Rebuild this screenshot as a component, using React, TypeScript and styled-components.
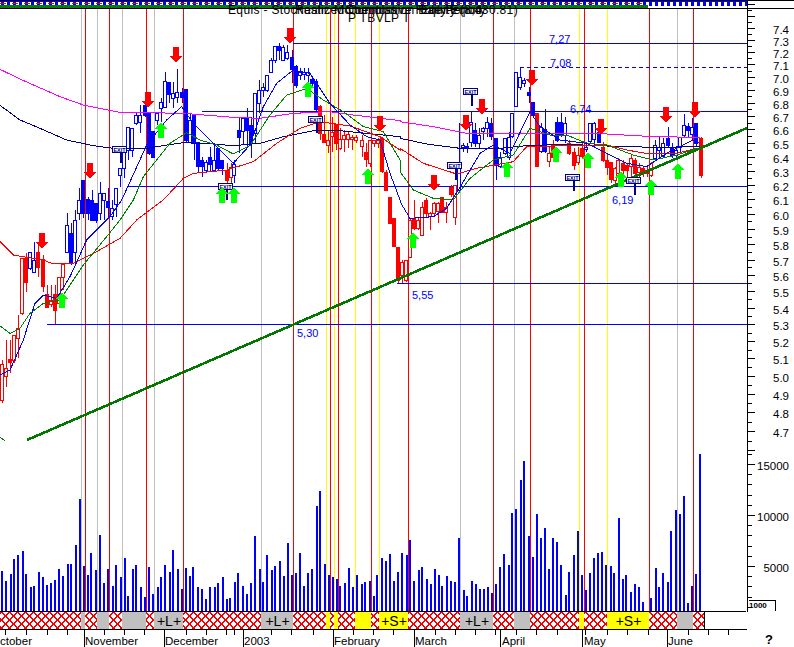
import React from 'react';
import styled, { createGlobalStyle } from 'styled-components';

const GlobalStyle = createGlobalStyle`
  html, body { margin: 0; padding: 0; background: #fff; }
`;

const ChartFrame = styled.div`
  width: 794px;
  height: 647px;
  background: #fff;
  overflow: hidden;
`;
const ChartSvg = styled.svg`
  display: block;
  width: 794px;
  height: 647px;
  shape-rendering: crispEdges;
`;
const AxisLabel = styled.text`
  font-family: "Liberation Sans", Arial, sans-serif;
  font-size: 11.5px;
  fill: #000;
  text-anchor: end;
`;
const MonthLabel = styled.text`
  font-family: "Liberation Sans", Arial, sans-serif;
  font-size: 11.5px;
  fill: #000;
`;
const LevelLabel = styled.text`
  font-family: "Liberation Sans", Arial, sans-serif;
  font-size: 11px;
  fill: #0000ff;
`;
const TitleText = styled.text`
  font-family: "Liberation Sans", Arial, sans-serif;
  font-size: 12px;
  letter-spacing: 0.35px;
  fill: #000;
`;
const BandLabel = styled.text`
  font-family: "Liberation Sans", Arial, sans-serif;
  font-size: 14px;
  fill: #000;
  text-anchor: middle;
`;
const ExitText = styled.text`
  font-family: "Liberation Sans", Arial, sans-serif;
  font-size: 5.5px;
  font-weight: 700;
  fill: #000080;
  text-anchor: middle;
`;
const HelpMark = styled.text`
  font-family: "Liberation Sans", Arial, sans-serif;
  font-size: 13px;
  font-weight: 700;
  fill: #000;
`;
const TinyValue = styled.text`
  font-family: "Liberation Sans", Arial, sans-serif;
  font-size: 8px;
  font-weight: 700;
  fill: #000;
`;

type P = [number, number];
const pts = (ox: number, oy: number, a: P[]) => a.map(([x, y]) => `${ox + x / 3},${oy + y / 3}`).join(' ');

const MAGENTA = [
  pts(0, 0, [[0,208],[60,237],[180,290],[250,315],[365,338],[440,338],[550,340],[700,352],[780,355],[880,340],[990,335],[1060,345],[1200,362]]),
  pts(400, 0, [[0,365],[100,380],[200,400],[340,400],[560,400],[620,402],[760,410],[900,412]]),
].join(' ');
const NAVY = [
  pts(0, 0, [[0,316],[60,360],[120,385],[200,420],[280,437],[340,445],[440,445],[500,435],[550,428],[640,432],[700,437],[780,430],[850,410],[940,392],[1020,392],[1100,400],[1200,410]]),
  pts(400, 0, [[0,415],[80,432],[180,445],[280,447],[380,437],[500,433],[620,438],[760,442],[900,440]]),
].join(' ');
const REDMA = [
  pts(0, 200, [[0,125],[40,165],[80,172],[130,180],[160,192],[220,190],[290,155],[360,115],[410,60],[490,0]]),
  pts(0, 0, [[550,535],[580,520],[680,510],[760,485],[830,430],[900,385],[960,365],[1050,378],[1140,410],[1200,450]]),
  pts(400, 0, [[0,445],[70,490],[170,522],[230,505],[340,485],[380,440],[500,437],[620,435],[680,450],[750,462],[830,460],[890,445]]),
].join(' ');
const GREENMA = [
  pts(0, 200, [[0,378],[30,400],[60,385],[90,340],[130,310],[180,300],[250,195],[320,110],[360,60],[400,0]]),
  pts(0, 0, [[430,530],[510,430],[560,398],[600,420],[650,435],[700,462],[750,437],[810,345],[860,285],[920,265],[970,300],[1030,335],[1090,380],[1150,395],[1200,480]]),
  pts(400, 0, [[0,515],[40,570],[100,595],[160,600],[210,535],[280,480],[340,465],[390,385],[450,405],[500,405],[560,430],[620,435],[700,465],[760,480],[830,465],[890,445]]),
].join(' ');
const BLUEMA = [
  pts(0, 200, [[0,525],[30,510],[70,420],[105,310],[130,285],[170,295],[210,230],[260,120],[330,50],[365,0]]),
  pts(0, 0, [[440,435],[500,360],[545,320],[580,370],[640,430],[700,490],[750,435],[790,320],[830,250],[880,210],[930,220],[990,310],[1050,375],[1100,410],[1140,420],[1170,520],[1200,600]]),
  pts(400, 0, [[0,605],[30,655],[100,650],[140,625],[175,570],[240,460],[280,435],[330,460],[390,335],[420,380],[480,420],[560,430],[620,460],[680,490],[740,500],[800,460],[880,420],[900,430]]),
].join(' ');

type C = [number, number, number, number, number, string];
const Z3: C[] = [[6,480,492,600,608,'r'],[18,420,505,530,560,'r'],[30,420,478,488,520,'R'],[42,405,405,480,490,'r'],[54,345,385,415,475,'r'],[66,175,175,340,345,'r'],[78,158,175,248,275,'R'],[90,155,157,205,210,'b'],[102,125,180,215,215,'b'],[114,125,155,200,230,'R'],[129,165,178,260,275,'R'],[141,255,282,322,322,'R'],[153,255,300,312,320,'r'],[165,255,282,330,372,'R'],[177,232,232,310,312,'r'],[189,193,193,232,270,'r'],[201,40,75,155,160,'b'],[213,70,100,190,195,'B'],[225,30,60,157,190,'b'],[1182,55,55,140,140,'R'],[1194,140,140,240,248,'R']];
const Z1: C[] = [[237,565,600,640,660,'b'],[250,540,540,640,655,'B'],[264,590,598,640,660,'B'],[276,570,600,660,660,'B'],[288,610,610,660,670,'B'],[300,545,580,640,660,'b'],[312,580,580,600,660,'b'],[324,565,603,620,650,'B'],[336,600,625,650,660,'b'],[348,565,565,612,650,'b'],[360,505,505,525,560,'b'],[372,445,445,505,535,'b'],[384,380,380,450,480,'b'],[396,385,385,450,470,'b'],[408,340,345,370,375,'b'],[420,315,345,365,400,'b'],[435,315,315,345,350,'B'],[447,340,340,460,465,'B'],[459,393,393,470,475,'B'],[471,340,340,362,375,'b'],[483,295,305,322,365,'b'],[495,215,243,320,325,'b'],[507,245,247,283,310,'B'],[519,245,280,296,325,'b'],[531,208,275,290,310,'b'],[546,265,275,290,310,'B'],[558,268,268,420,425,'B'],[570,340,360,425,430,'b'],[582,342,342,425,480,'B'],[594,425,425,497,515,'B'],[606,470,480,497,530,'B'],[618,480,485,510,520,'b'],[630,440,470,490,515,'B'],[642,430,480,510,510,'b'],[654,445,445,505,510,'B'],[666,480,480,505,525,'B'],[681,490,510,540,550,'R'],[693,490,500,530,550,'r'],[702,480,493,525,550,'b'],[717,350,390,410,460,'B'],[729,355,355,395,435,'b'],[741,325,355,390,440,'B'],[753,350,375,430,475,'B'],[765,280,280,400,430,'b'],[777,240,270,310,340,'b'],[789,250,260,270,290,'b'],[801,225,225,270,275,'b'],[813,175,180,215,220,'b'],[825,137,137,180,190,'b'],[837,130,137,150,180,'B'],[849,135,140,180,182,'b'],[861,135,155,172,180,'b'],[876,150,170,205,250,'B'],[888,195,197,255,265,'B'],[900,205,215,225,240,'b'],[912,205,215,222,240,'b'],[924,205,215,225,245,'b'],[936,230,238,250,260,'B'],[948,238,243,328,335,'B'],[960,315,318,400,420,'R'],[972,345,402,425,430,'R'],[984,390,420,435,460,'r'],[996,350,395,408,455,'r'],[1008,372,372,430,450,'R'],[1020,385,418,445,450,'r'],[1032,390,405,418,455,'r'],[1044,395,403,417,445,'r'],[1056,405,410,415,450,'r'],[1068,405,410,420,430,'r'],[1086,405,420,438,470,'r'],[1098,430,456,478,500,'R'],[1110,420,420,490,500,'r'],[1122,420,420,428,440,'r'],[1134,415,420,430,445,'r'],[1146,410,415,515,520,'R'],[1158,510,515,568,570,'R'],[1170,590,590,668,670,'R']];
const Z4: C[] = [[6,330,335,375,400,'r'],[18,330,330,390,395,'r'],[30,205,210,320,325,'r'],[42,150,205,235,240,'R'],[54,205,210,235,240,'r'],[66,155,170,255,258,'r'],[78,145,150,190,205,'R'],[90,185,190,200,240,'r'],[102,155,160,190,200,'r'],[114,155,160,185,220,'r'],[126,140,140,185,190,'R'],[138,155,170,185,218,'r'],[153,105,110,130,140,'R'],[165,105,105,200,225,'r']];
const Z2: C[] = [[177,370,488,570,575,'b'],[189,430,435,440,455,'b'],[201,430,437,440,460,'b'],[213,335,365,425,440,'b'],[225,370,390,430,440,'B'],[237,385,405,430,445,'b'],[249,380,385,395,420,'b'],[261,350,365,382,410,'b'],[273,355,370,410,420,'B'],[288,415,415,495,540,'B'],[300,455,470,497,505,'b'],[315,415,415,460,465,'b'],[327,395,410,470,480,'b'],[336,340,340,410,415,'b'],[348,217,217,320,322,'b'],[360,203,232,262,270,'b'],[372,235,240,248,262,'b'],[387,260,275,285,310,'B'],[399,305,305,345,348,'B'],[411,340,340,498,500,'R'],[423,370,382,455,458,'b'],[435,328,388,455,460,'B'],[447,440,460,485,500,'r'],[459,420,435,472,480,'R'],[471,350,365,420,425,'B'],[483,340,365,405,410,'B'],[495,350,368,405,430,'b'],[507,420,430,460,465,'R'],[522,445,455,495,510,'R'],[534,440,465,485,495,'r'],[546,430,445,470,475,'R'],[558,425,440,445,455,'b'],[570,370,370,425,430,'b'],[582,365,368,415,440,'b'],[597,358,395,425,430,'B'],[610,425,440,480,485,'R'],[622,460,480,500,525,'R'],[634,485,485,535,550,'R'],[646,500,505,540,555,'r'],[655,475,480,520,540,'r'],[670,480,490,510,530,'R'],[682,490,495,510,535,'R'],[694,465,475,500,530,'r'],[706,475,480,520,540,'R'],[718,490,500,515,530,'r'],[730,500,505,520,530,'R'],[742,495,510,520,530,'r'],[754,485,490,525,530,'r'],[765,420,435,475,480,'b'],[777,410,440,450,475,'b'],[789,415,430,470,475,'b'],[804,380,415,435,445,'B'],[816,430,445,465,475,'B'],[828,440,450,465,470,'b'],[840,410,410,440,460,'b'],[852,342,375,405,415,'b'],[864,370,378,390,410,'B'],[876,355,380,400,420,'b'],[888,370,370,430,440,'B'],[903,410,415,527,533,'R']];

const allCandles = [
  ...Z3.map(c => ({ c, ox: 0, oy: 200 })),
  ...Z1.map(c => ({ c, ox: 0, oy: 0 })),
  ...Z4.map(c => ({ c, ox: 400, oy: 150 })),
  ...Z2.map(c => ({ c, ox: 400, oy: 0 })),
];

const VOL_A: P[] = [[6,362],[18,393],[33,372],[42,328],[54,315],[69,304],[78,372],[93,411],[102,408],[117,366],[129,380],[141,405],[153,399],[165,391],[177,358],[189,377],[204,342],[213,342],[228,285],[240,148],[252,349],[264,375],[273,310],[288,360],[300,255],[312,400],[324,357],[339,408],[348,346],[363,382],[375,325],[384,438],[399,357],[408,346],[423,411],[435,441],[447,352],[459,432],[474,411],[483,381],[495,345],[510,367],[519,300],[534,357],[546,418],[558,354],[570,379],[579,352],[594,412],[606,418],[618,447],[630,411],[645,411],[654,399],[669,381],[681,447],[690,444],[705,396],[714,370],[729,408],[741,432],[753,400],[765,258],[780,357],[789,396],[801,315],[816,360],[825,349],[840,333],[852,379],[864,279],[876,375],[888,370],[900,309],[912,408],[924,369],[936,357],[951,168],[960,123],[975,342],[987,375],[999,382],[1011,387],[1020,408],[1035,399],[1047,354],[1059,411],[1071,375],[1086,402],[1095,396],[1110,393],[1122,438],[1131,375],[1146,324],[1158,333],[1170,313],[1182,393],[1194,366]];
const VOL_B: P[] = [[6,309],[21,316],[30,270],[42,393],[57,360],[66,351],[81,387],[93,402],[105,357],[117,375],[126,408],[141,378],[153,393],[165,397],[177,264],[192,420],[201,438],[216,393],[228,402],[240,418],[252,418],[264,411],[276,429],[288,402],[300,351],[312,312],[327,345],[336,189],[348,177],[363,90],[372,33],[387,258],[399,321],[411,192],[423,264],[435,235],[447,357],[459,264],[471,277],[483,345],[498,435],[507,366],[522,315],[534,243],[546,375],[558,420],[570,369],[582,324],[594,309],[606,306],[618,345],[633,349],[642,369],[657,204],[669,387],[678,375],[693,426],[705,402],[717,411],[729,456],[753,444],[768,354],[777,411],[789,369],[804,396],[813,243],[828,180],[840,192],[852,138],[864,459],[876,408],[888,372],[900,12]];
const VOLUME = [...VOL_A.map(([x, y]) => [x / 3, 450 + y / 3]), ...VOL_B.map(([x, y]) => [400 + x / 3, 450 + y / 3])];

const RED_V = [85, 109, 146, 183, 293, 330, 338, 371, 408, 493, 530, 584, 649, 693];
const GRAY_V = [81, 97, 122, 154, 261, 460, 514, 677];
const YELLOW_V = [326, 334, 355, 379, 579, 607];

type Seg = [number, number, string, string?];
const BAND: Seg[] = [[0,81,'h'],[81,85,'g'],[85,97,'h'],[97,109,'g'],[109,122,'h'],[122,146,'g'],[146,154,'h'],[154,183,'g','+L+'],[183,261,'h'],[261,293,'g','+L+'],[293,326,'h'],[326,330,'y'],[330,334,'h'],[334,338,'y'],[338,355,'h'],[355,371,'y'],[371,379,'h'],[379,408,'y','+S+'],[408,460,'h'],[460,493,'g','+L+'],[493,514,'h'],[514,530,'g'],[530,579,'h'],[579,584,'y'],[584,607,'h'],[607,649,'y','+S+'],[649,677,'h'],[677,693,'g'],[693,704,'h']];
const BAND_FILL: Record<string, string> = { h: 'url(#hatch)', g: '#c0c0c0', y: '#ffff00' };
const HATCH_DOTS: P[] = [0, 1, 2, 3, 4, 5, 6, 7].flatMap(i => [[i, i], [7 - i, i]] as P[]);

const SHORT_T = [5,26,47,67,104,124,144,186,206,226,234,271,291,313,353,373,393,414,435,455,475,495,516,536,557,585,607,627,648,688,708,728];
const LONG_T = [84,164,243,333,414,500,582,667];

const priceY = (v: number) => 324.3 - 889 * Math.log(v / 5.3);
const PRICE_LABELS: [string, number][] = [];
for (let i = 47; i <= 74; i++) PRICE_LABELS.push([(i / 10).toFixed(1), i / 10]);
const minorTicks: number[] = [];
const majorTicks: number[] = [];
for (let i = 92; i <= 153; i++) (i % 2 ? minorTicks : majorTicks).push(priceY(i / 20));
const volY = (v: number) => 617 - v * 0.0102;
const volMinor = [1000, 2000, 3000, 4000, 6000, 7000, 8000, 9000, 11000, 12000, 13000, 14000, 16000];

const UP: P[] = [[161,122],[308,81],[368,168],[222,187],[234,187],[62,292],[413,232],[507,161],[556,146],[588,152],[621,171],[651,179],[678,163]];
const DOWN: P[] = [[90,163],[148,92],[176,47],[290,28],[380,116],[42,233],[434,175],[466,115],[482,99],[532,70],[601,119],[666,107],[695,102]];
const EXITS: [number, number, number][] = [[120,147,163],[226,184,200],[316,117,133],[471,89,106],[455,163,180],[573,175,191],[634,178,195]];

const Candle: React.FC<{ x: number; hi: number; top: number; bot: number; lo: number; kind: string }> = ({ x, hi, top, bot, lo, kind }) => {
  const color = kind.toLowerCase() === 'b' ? '#0000ff' : '#ff0000';
  const filled = kind === 'B' || kind === 'R';
  const cx = Math.round(x);
  return (
    <g>
      <rect x={cx} y={hi} width={1} height={Math.max(lo - hi, 1)} fill={color} />
      <rect
        x={cx - 1.5}
        y={Math.round(top) + 0.5}
        width={3}
        height={Math.max(Math.round(bot - top), 1)}
        fill={filled ? color : '#fff'}
        stroke={color}
        strokeWidth={1}
      />
    </g>
  );
};

const App: React.FC = () => (
  <ChartFrame>
    <GlobalStyle />
    <ChartSvg viewBox="0 0 794 647" xmlns="http://www.w3.org/2000/svg">
      <defs>
        <pattern id="hatch" width="8" height="8" patternUnits="userSpaceOnUse" x="1" y="612">
          <rect width="8" height="8" fill="#fff" />
          {HATCH_DOTS.map(([x, y]) => <rect key={`${x}-${y}`} x={x} y={y} width={2} height={1} fill="#f00000" />)}
        </pattern>
        <pattern id="squares" width="6" height="4" patternUnits="userSpaceOnUse" x="1" y="2">
          <rect width="6" height="4" fill="#0000ff" />
          <rect x="3" width="3" height="4" fill="#fff" />
        </pattern>
      </defs>

      {/* top strip */}
      <rect x={0} y={0} width={794} height={1} fill="#000" />
      <rect x={0} y={1} width={748} height={1} fill="#0000ff" />
      <rect x={0} y={2} width={748} height={4} fill="url(#squares)" />
      <line x1={0} y1={3.5} x2={648} y2={3.5} stroke="#ff0000" strokeWidth={1} strokeDasharray="6 6" />
      <rect x={0} y={5} width={648} height={3} fill="#008000" />
      <rect x={0} y={8} width={794} height={1} fill="#000" />

      {/* vertical signal lines */}
      {GRAY_V.map(x => <rect key={`g${x}`} x={x} y={9} width={1} height={602} fill="#c0c0c0" />)}
      {YELLOW_V.map(x => <rect key={`y${x}`} x={x} y={9} width={1} height={602} fill="#ffff00" />)}
      {RED_V.map(x => <rect key={`r${x}`} x={x} y={9} width={1} height={602} fill="#ff0000" />)}

      {/* levels */}
      <rect x={293} y={43} width={454} height={1} fill="#0000ff" />
      <line x1={520} y1={67.5} x2={747} y2={67.5} stroke="#0000ff" strokeWidth={1} strokeDasharray="4 3" />
      <rect x={202} y={111} width={545} height={1} fill="#0000ff" />
      <rect x={128} y={186} width={619} height={1} fill="#0000ff" />
      <rect x={397} y={283} width={350} height={1} fill="#0000ff" />
      <rect x={47} y={324} width={700} height={1} fill="#0000ff" />
      <LevelLabel x={549} y={43}>7,27</LevelLabel>
      <LevelLabel x={550} y={67}>7,08</LevelLabel>
      <LevelLabel x={570} y={113}>6,74</LevelLabel>
      <LevelLabel x={612} y={204}>6,19</LevelLabel>
      <LevelLabel x={412} y={299}>5,55</LevelLabel>
      <LevelLabel x={297} y={337}>5,30</LevelLabel>

      {/* candles */}
      {allCandles.map(({ c, ox, oy }, i) => (
        <Candle key={i} x={ox + c[0] / 3} hi={oy + c[1] / 3} top={oy + c[2] / 3} bot={oy + c[3] / 3} lo={oy + c[4] / 3} kind={c[5]} />
      ))}

      {/* moving averages */}
      <polyline points={MAGENTA} fill="none" stroke="#ff00ff" strokeWidth={1} />
      <polyline points={NAVY} fill="none" stroke="#000080" strokeWidth={1} />
      <polyline points={REDMA} fill="none" stroke="#ff0000" strokeWidth={1} />
      <polyline points={GREENMA} fill="none" stroke="#008000" strokeWidth={1} />
      <polyline points={BLUEMA} fill="none" stroke="#0000ff" strokeWidth={1} />
      <polyline points="0,437 5,441" fill="none" stroke="#008000" strokeWidth={1} />

      {/* trend line */}
      <line x1={27} y1={440} x2={747} y2={128} stroke="#007800" strokeWidth={2.6} />

      {/* exit flags */}
      {EXITS.map(([x, y, end]) => (
        <g key={`e${x}`}>
          <rect x={x} y={y} width={2} height={end - y} fill="#000080" />
          <rect x={x - 7.5} y={y - 0.5} width={14} height={6} fill="#fff" stroke="#000080" strokeWidth={1} />
          <ExitText x={x - 0.5} y={y + 4.8}>EXIT</ExitText>
        </g>
      ))}

      {/* arrows */}
      {UP.map(([x, y]) => (
        <polygon key={`u${x}`} fill="#00ff00" points={`${x},${y} ${x + 6.5},${y + 7} ${x + 3},${y + 7} ${x + 3},${y + 16} ${x - 3},${y + 16} ${x - 3},${y + 7} ${x - 6.5},${y + 7}`} />
      ))}
      {DOWN.map(([x, y]) => (
        <polygon key={`d${x}`} fill="#ff0000" points={`${x},${y + 16} ${x + 6.5},${y + 9} ${x + 3},${y + 9} ${x + 3},${y} ${x - 3},${y} ${x - 3},${y + 9} ${x - 6.5},${y + 9}`} />
      ))}

      {/* title */}
      <TitleText x={228} y={14}>Equis - Stochastic Momentum</TitleText>
      <TitleText x={295} y={14}>Realized Cumulative Rule Period</TitleText>
      <TitleText x={345} y={14}>Commission Daily Equity</TitleText>
      <TitleText x={518} y={14} textAnchor="end">Equity (8,430.81)</TitleText>
      <TitleText x={348} y={22}>P TBVLP T</TitleText>

      {/* volume */}
      {VOLUME.map(([x, y], i) => (
        <rect key={`v${i}`} x={Math.round(x) - 1} y={Math.round(y)} width={2} height={611 - Math.round(y)} fill="#0000ff" />
      ))}

      {/* signal band */}
      {BAND.map(([a, b, kind, label]) => (
        <g key={`b${a}`}>
          <rect x={a} y={612} width={b - a} height={17} fill={BAND_FILL[kind]} />
          <rect x={b} y={612} width={1} height={17} fill="#000" />
          {label && <BandLabel x={(a + b) / 2 + 0.5} y={626}>{label}</BandLabel>}
        </g>
      ))}
      <rect x={0} y={611} width={746} height={1} fill="#000" />
      <rect x={0} y={629} width={747} height={1} fill="#000" />

      {/* bottom axis */}
      {SHORT_T.map(x => <rect key={`s${x}`} x={x} y={630} width={1} height={5} fill="#000" />)}
      {LONG_T.map(x => <rect key={`l${x}`} x={x} y={630} width={1} height={17} fill="#000" />)}
      <MonthLabel x={0} y={645}>ctober</MonthLabel>
      <MonthLabel x={85} y={645}>November</MonthLabel>
      <MonthLabel x={165} y={645}>December</MonthLabel>
      <MonthLabel x={244} y={645}>2003</MonthLabel>
      <MonthLabel x={334} y={645}>February</MonthLabel>
      <MonthLabel x={415} y={645}>March</MonthLabel>
      <MonthLabel x={502} y={645}>April</MonthLabel>
      <MonthLabel x={584} y={645}>May</MonthLabel>
      <MonthLabel x={668} y={645}>June</MonthLabel>

      {/* right axis */}
      <rect x={747} y={0} width={1} height={612} fill="#000" />
      {majorTicks.map(y => <rect key={`M${y}`} x={748} y={Math.round(y)} width={7} height={1} fill="#000" />)}
      {minorTicks.map(y => <rect key={`m${y}`} x={748} y={Math.round(y)} width={4} height={1} fill="#000" />)}
      {PRICE_LABELS.map(([t, v]) => <AxisLabel key={t} x={789} y={Math.round(priceY(v)) + 6}>{t}</AxisLabel>)}
      {[15000, 10000, 5000].map(v => (
        <g key={v}>
          <rect x={748} y={Math.round(volY(v))} width={7} height={1} fill="#000" />
          <AxisLabel x={789} y={Math.round(volY(v)) + 6}>{v}</AxisLabel>
        </g>
      ))}
      {volMinor.map(v => <rect key={v} x={748} y={Math.round(volY(v))} width={4} height={1} fill="#000" />)}

      {/* small scale box */}
      <rect x={749} y={600} width={27} height={1} fill="#000" />
      <rect x={775} y={600} width={1} height={11} fill="#000" />
      <TinyValue x={749} y={608}>1000</TinyValue>
      <HelpMark x={765} y={644}>?</HelpMark>
    </ChartSvg>
  </ChartFrame>
);

export default App;
